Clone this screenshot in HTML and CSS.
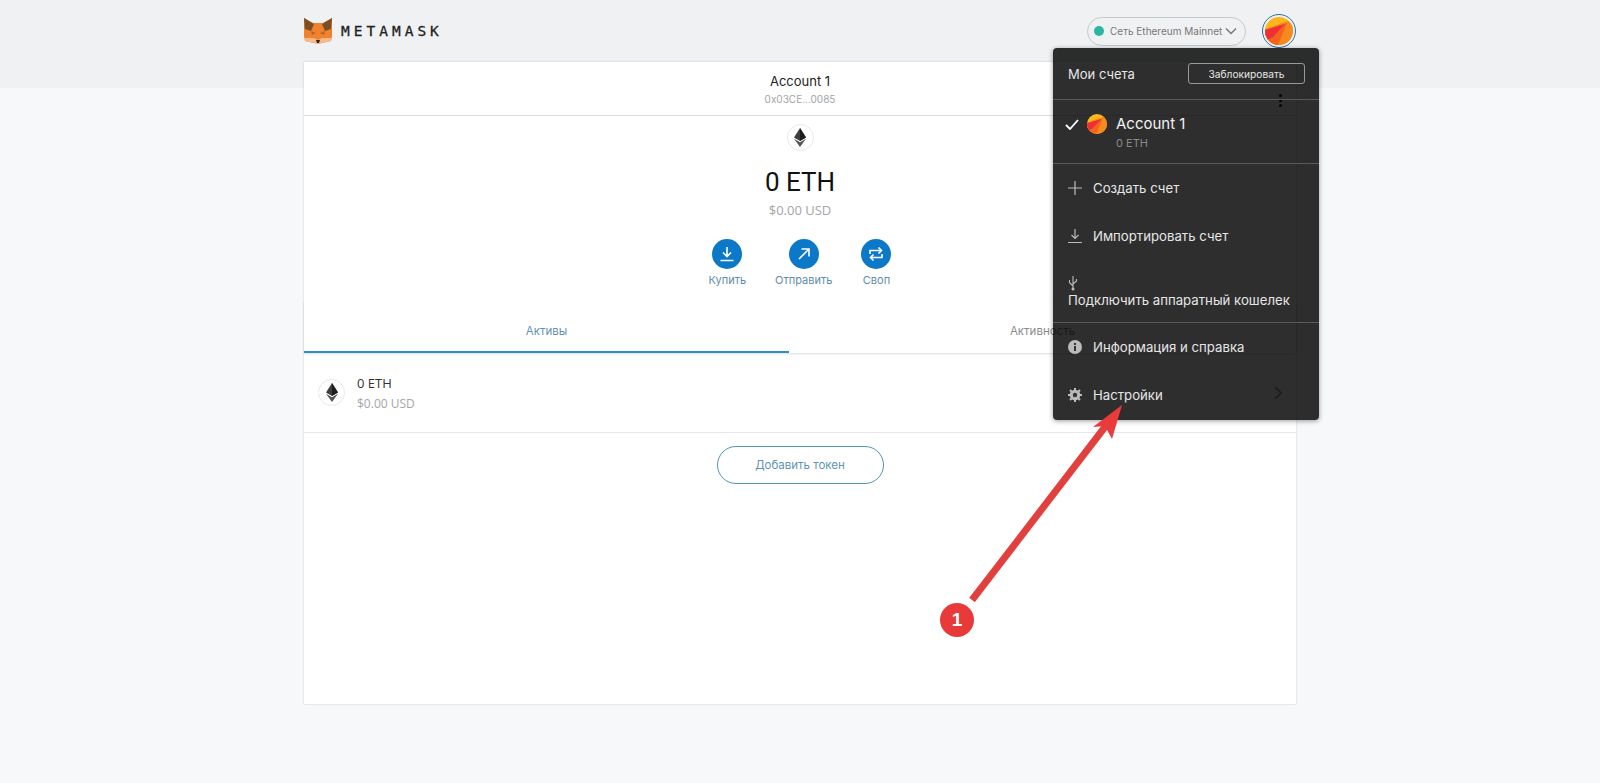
FILE: index.html
```html
<!DOCTYPE html>
<html lang="ru">

<head>
    <meta charset="UTF-8">
    <meta name="viewport" content="width=device-width, initial-scale=1.0">
    <title>MetaMask</title>
    <link rel="stylesheet" href="styles.css">
</head>

<body>
    <div class="page">
        <!-- шапка -->
        <header class="topbar">
            <div class="brand">
                <svg class="fox" viewBox="0 0 28 26" width="28" height="26">
                    <polygon points="0,0 9,5 19,5 28,0 28,18 27,23 18,25 14,26 10,25 1,23 0,18" fill="#f0822e" />
                    <polygon points="0,0 10,6 7,13 1,11" fill="#7a4f26" />
                    <polygon points="28,0 18,6 21,13 27,11" fill="#7a4f26" />
                    <polygon points="7,13 12,15 8,17" fill="#b5652a" />
                    <polygon points="21,13 16,15 20,17" fill="#b5652a" />
                    <polygon points="0,20 10,20 14,22 18,20 28,20 27,23 18,25 14,26 10,25 1,23" fill="#f7b98a" />
                    <polygon points="12,22 16,22 15,25 13,25" fill="#33261c" />
                </svg>
                <span class="brand-name">METAMASK</span>
            </div>
            <div class="network">
                <span class="network-dot"></span>
                <span class="network-name">Сеть Ethereum Mainnet</span>
                <svg viewBox="0 0 12 8" width="12" height="8">
                    <path d="M1 1.5 L6 6.5 L11 1.5" fill="none" stroke="#777" stroke-width="1.4" />
                </svg>
            </div>
            <div class="avatar-ring">
                <svg viewBox="0 0 28 28" width="28" height="28" class="jazz">
                    <rect width="28" height="28" fill="#fbb81c" />
                    <polygon points="0,12 23,4 28,8 28,28 0,28" fill="#f68a1e" />
                    <polygon points="0,13 22,6 13,28 0,28" fill="#f5641d" />
                    <polygon points="0,13 20,7 8,20 0,24" fill="#ef2f38" />
                </svg>
            </div>

            <!-- меню аккаунтов -->
            <div class="menu">
                <div class="menu-head">
                    <span>Мои счета</span>
                    <button class="lock-btn">Заблокировать</button>
                </div>
                <div class="menu-account">
                    <svg class="menu-check" viewBox="0 0 14 11" width="14" height="11">
                        <path d="M1 6 L5 10 L13 1" fill="none" stroke="#fff" stroke-width="1.8" />
                    </svg>
                    <svg viewBox="0 0 28 28" width="20" height="20" class="jazz">
                        <rect width="28" height="28" fill="#fbb81c" />
                        <polygon points="0,12 23,4 28,8 28,28 0,28" fill="#f68a1e" />
                        <polygon points="0,13 22,6 13,28 0,28" fill="#f5641d" />
                        <polygon points="0,13 20,7 8,20 0,24" fill="#ef2f38" />
                    </svg>
                    <div class="menu-account-text">
                        <div class="menu-account-name">Account 1</div>
                        <div class="menu-account-sum">0 ETH</div>
                    </div>
                </div>
                <div class="menu-group">
                    <div class="menu-item">
                        <svg viewBox="0 0 16 16" width="16" height="16">
                            <path d="M8 1 V15 M1 8 H15" stroke="#bbb" stroke-width="1.2" />
                        </svg>
                        <span>Создать счет</span>
                    </div>
                    <div class="menu-item">
                        <svg viewBox="0 0 16 16" width="16" height="16">
                            <path d="M8 1 V10 M4.5 7 L8 10.5 L11.5 7 M1 14.5 H15" fill="none" stroke="#bbb" stroke-width="1.2" />
                        </svg>
                        <span>Импортировать счет</span>
                    </div>
                    <div class="menu-item menu-item-col">
                        <svg viewBox="0 0 10 16" width="10" height="16">
                            <path d="M5 1 V15 M5 11 L1.5 7.5 V5 M5 9 L8.5 6 V4" fill="none" stroke="#bbb" stroke-width="1.1" />
                            <circle cx="5" cy="14" r="1.5" fill="#bbb" />
                        </svg>
                        <span>Подключить аппаратный кошелек</span>
                    </div>
                </div>
                <div class="menu-group">
                    <div class="menu-item">
                        <svg viewBox="0 0 16 16" width="16" height="16">
                            <circle cx="8" cy="8" r="7" fill="#bbb" />
                            <rect x="7" y="7" width="2" height="5" fill="#333" />
                            <rect x="7" y="4" width="2" height="2" fill="#333" />
                        </svg>
                        <span>Информация и справка</span>
                    </div>
                    <div class="menu-item">
                        <svg viewBox="0 0 16 16" width="16" height="16">
                            <circle cx="8" cy="8" r="4" fill="none" stroke="#bbb" stroke-width="2.6" />
                            <path d="M8 1 V15 M1 8 H15 M3 3 L13 13 M13 3 L3 13" stroke="#bbb" stroke-width="2" />
                            <circle cx="8" cy="8" r="2.2" fill="#333" />
                        </svg>
                        <span>Настройки</span>
                        <svg class="menu-chevron" viewBox="0 0 8 14" width="8" height="14">
                            <path d="M1 1 L7 7 L1 13" fill="none" stroke="#1c1c1c" stroke-width="1.6" />
                        </svg>
                    </div>
                </div>
            </div>
        </header>

        <!-- карточка кошелька -->
        <main class="card">
            <div class="card-head">
                <span></span>
                <div class="account-title">
                    <div class="account-name">Account 1</div>
                    <div class="account-addr">0x03CE...0085</div>
                </div>
                <div class="kebab"><i></i><i></i><i></i></div>
            </div>

            <div class="balance">
                <div class="coin">
                    <svg viewBox="0 0 14 22" width="12" height="19">
                        <polygon points="7,0 14,11 7,15 0,11" fill="#3d3d3d" />
                        <polygon points="7,0 14,11 7,15" fill="#1e1e1e" />
                        <polygon points="7,16.5 14,12.5 7,22 0,12.5" fill="#555" />
                    </svg>
                </div>
                <div class="balance-main">0 ETH</div>
                <div class="balance-usd">$0.00 USD</div>
                <div class="actions">
                    <div class="action">
                        <div class="action-btn">
                            <svg viewBox="0 0 16 16" width="16" height="16">
                                <path d="M8 1 V10 M4 6.5 L8 10.5 L12 6.5 M1.5 14.5 H14.5" fill="none" stroke="#fff" stroke-width="1.6" />
                            </svg>
                        </div>
                        <span>Купить</span>
                    </div>
                    <div class="action">
                        <div class="action-btn">
                            <svg viewBox="0 0 16 16" width="16" height="16">
                                <path d="M3 13 L13 3 M5.5 3 H13 V10.5" fill="none" stroke="#fff" stroke-width="1.6" />
                            </svg>
                        </div>
                        <span>Отправить</span>
                    </div>
                    <div class="action">
                        <div class="action-btn">
                            <svg viewBox="0 0 16 16" width="16" height="16">
                                <path d="M2 8 V4.5 H13 M10.5 1.5 L13.5 4.5 L10.5 7.5 M14 8 V11.5 H3 M5.5 8.5 L2.5 11.5 L5.5 14.5" fill="none" stroke="#fff" stroke-width="1.6" />
                            </svg>
                        </div>
                        <span>Своп</span>
                    </div>
                </div>
            </div>

            <div class="tabs">
                <div class="tab tab-active">Активы</div>
                <div class="tab tab-rest">Активность</div>
            </div>

            <div class="asset">
                <div class="coin">
                    <svg viewBox="0 0 14 22" width="12" height="19">
                        <polygon points="7,0 14,11 7,15 0,11" fill="#3d3d3d" />
                        <polygon points="7,0 14,11 7,15" fill="#1e1e1e" />
                        <polygon points="7,16.5 14,12.5 7,22 0,12.5" fill="#555" />
                    </svg>
                </div>
                <div>
                    <div class="asset-name">0 ETH</div>
                    <div class="asset-usd">$0.00 USD</div>
                </div>
            </div>

            <div class="add-token">
                <button class="add-token-btn">Добавить токен</button>
            </div>
        </main>

        <!-- красная стрелка поверх скриншота -->
        <svg class="pointer" viewBox="0 0 1600 783" width="1600" height="783">
            <path d="M972 600 L1108 423" stroke="#e2403f" stroke-width="7" fill="none" />
            <polygon points="1122,405 1112,439 1105,426 1093,427" fill="#ea3b3b" />
        </svg>
        <div class="badge">1</div>
    </div>
</body>

</html>
```

FILE: styles.css
```css
/* Основа */
body {
    margin: 0;
    font-family: Inter, "Noto Sans", sans-serif;
    color: #333;
    background: linear-gradient(#eff1f2 88px, #f7f8f9 88px);
}

.page {
    position: relative;
    width: 992px;
    height: 783px;
    margin: 0 auto;
}

/* Шапка */
.topbar {
    position: relative;
    display: flex;
    align-items: center;
    height: 62px;
}

.brand {
    display: flex;
    align-items: center;
    gap: 9px;
    margin-right: auto;
}

.brand-name {
    font-family: "DejaVu Sans Mono", monospace;
    font-size: 14.5px;
    letter-spacing: 4px;
    color: #222;
    -webkit-text-stroke: 0.3px #222;
}

.network {
    display: flex;
    align-items: center;
    width: 159px;
    height: 29px;
    box-sizing: border-box;
    padding: 0 8px 0 6px;
    border: 1px solid #c6cacc;
    border-radius: 15px;
    font-size: 10px;
    color: #777;
}

.network-dot {
    width: 10px;
    height: 10px;
    margin-right: 6px;
    border-radius: 50%;
    background: #29b6a6;
}

.network-name {
    flex: 1;
    white-space: nowrap;
}

.avatar-ring {
    display: flex;
    padding: 2px;
    margin-left: 16px;
    border: 1px solid #2f6f9f;
    border-radius: 50%;
}

.jazz {
    display: block;
    border-radius: 50%;
}

/* Меню */
.menu {
    position: absolute;
    top: 48px;
    right: -23px;
    z-index: 5;
    width: 266px;
    height: 372px;
    border-radius: 4px;
    background: rgba(0, 0, 0, 0.82);
    box-shadow: 0 1px 5px rgba(0, 0, 0, 0.4);
    color: #e6e6e6;
}

.menu-head {
    display: flex;
    align-items: center;
    justify-content: space-between;
    height: 51px;
    padding: 0 14px 0 15px;
    border-bottom: 1px solid #5a5a5a;
    font-size: 13px;
}

.lock-btn {
    width: 117px;
    height: 21px;
    padding: 0;
    border: 1px solid #999;
    border-radius: 3px;
    background: transparent;
    font-family: inherit;
    font-size: 10.2px;
    color: #e6e6e6;
}

.menu-account {
    display: flex;
    align-items: flex-start;
    gap: 8px;
    height: 64px;
    box-sizing: border-box;
    padding: 14px 12px 0;
    border-bottom: 1px solid #5a5a5a;
}

.menu-check {
    margin-top: 5px;
}

.menu-account-text {
    margin-left: 1px;
}

.menu-account-name {
    font-size: 15px;
    color: #f2f2f2;
}

.menu-account-sum {
    margin-top: 3px;
    font-size: 11px;
    color: #8a8a8a;
}

.menu-group {
    border-bottom: 1px solid #5a5a5a;
}

.menu-group:last-child {
    border-bottom: none;
}

.menu-item {
    display: flex;
    align-items: center;
    gap: 10px;
    height: 48px;
    box-sizing: border-box;
    padding: 0 14px;
    font-size: 13.2px;
    white-space: nowrap;
}

.menu-item-col {
    flex-direction: column;
    align-items: flex-start;
    justify-content: flex-end;
    gap: 1px;
    height: 62px;
    padding: 0 15px 14px;
}

.menu-chevron {
    margin: -5px 23px 0 auto;
}

/* Карточка */
.card {
    height: 642px;
    background: #fff;
    box-shadow: 0 0 2px rgba(0, 0, 0, 0.18);
}

.card-head {
    display: grid;
    grid-template-columns: 1fr auto 1fr;
    align-items: center;
    height: 53px;
    border-bottom: 1px solid #dcdfe1;
}

.account-title {
    text-align: center;
}

.account-name {
    font-size: 13px;
    color: #222;
}

.account-addr {
    margin-top: 4px;
    font-size: 10px;
    color: #a0a4a8;
}

.kebab {
    display: flex;
    flex-direction: column;
    gap: 2px;
    justify-self: end;
    margin: 24px 14px 0 0;
}

.kebab i {
    width: 3px;
    height: 3px;
    border-radius: 50%;
    background: #111;
}

.coin {
    display: flex;
    align-items: center;
    justify-content: center;
    width: 25px;
    height: 25px;
    border: 1px solid #e6e8ea;
    border-radius: 50%;
    background: #fff;
}

.balance {
    display: flex;
    flex-direction: column;
    align-items: center;
    height: 185px;
    padding-top: 8px;
    box-sizing: border-box;
}

.balance-main {
    margin-top: 16px;
    font-family: "Roboto", sans-serif;
    font-size: 26px;
    color: #111;
}

.balance-usd {
    margin-top: 4px;
    font-family: "Open Sans", sans-serif;
    font-size: 13px;
    color: #a3a6a9;
}

.actions {
    display: flex;
    justify-content: center;
    gap: 29px;
    margin-top: 20px;
}

.action {
    display: flex;
    flex-direction: column;
    align-items: center;
    gap: 4px;
    font-size: 11px;
    color: #5f8cab;
}

.action-btn {
    display: flex;
    align-items: center;
    justify-content: center;
    width: 30px;
    height: 30px;
    border-radius: 50%;
    background: #0b78c8;
}

/* Вкладки */
.tabs {
    display: flex;
    box-shadow: 0 1px 2px rgba(0, 0, 0, 0.14);
}

.tab {
    height: 52px;
    box-sizing: border-box;
    padding-top: 23px;
    text-align: center;
    font-size: 11.5px;
}

.tab-active {
    width: 485px;
    border-bottom: 2px solid #2f8fc4;
    color: #5f94b5;
}

.tab-rest {
    flex: 1;
    color: #8a8d90;
}

/* Список токенов */
.asset {
    display: flex;
    align-items: center;
    gap: 12px;
    height: 80px;
    padding-left: 14px;
    border-bottom: 1px solid #e6e8ea;
    box-sizing: border-box;
    font-family: "Open Sans", sans-serif;
}

.asset-name {
    font-size: 13px;
    color: #333;
}

.asset-usd {
    margin-top: 3px;
    font-size: 12px;
    color: #a3a6a9;
}

.add-token {
    display: flex;
    justify-content: center;
    padding-top: 13px;
}

.add-token-btn {
    width: 167px;
    height: 38px;
    padding: 0;
    border: 1px solid #4f97b5;
    border-radius: 19px;
    background: #fff;
    font-family: inherit;
    font-size: 11.5px;
    color: #5f94b5;
}

/* Стрелка и значок */
.pointer {
    position: absolute;
    top: 0;
    left: -304px;
    z-index: 6;
    pointer-events: none;
}

.badge {
    position: absolute;
    top: 603px;
    left: 636px;
    z-index: 7;
    width: 34px;
    height: 34px;
    border-radius: 50%;
    background: #e93a3a;
    text-align: center;
    font: bold 19px/34px "Liberation Sans", sans-serif;
    color: #fff;
}
```
